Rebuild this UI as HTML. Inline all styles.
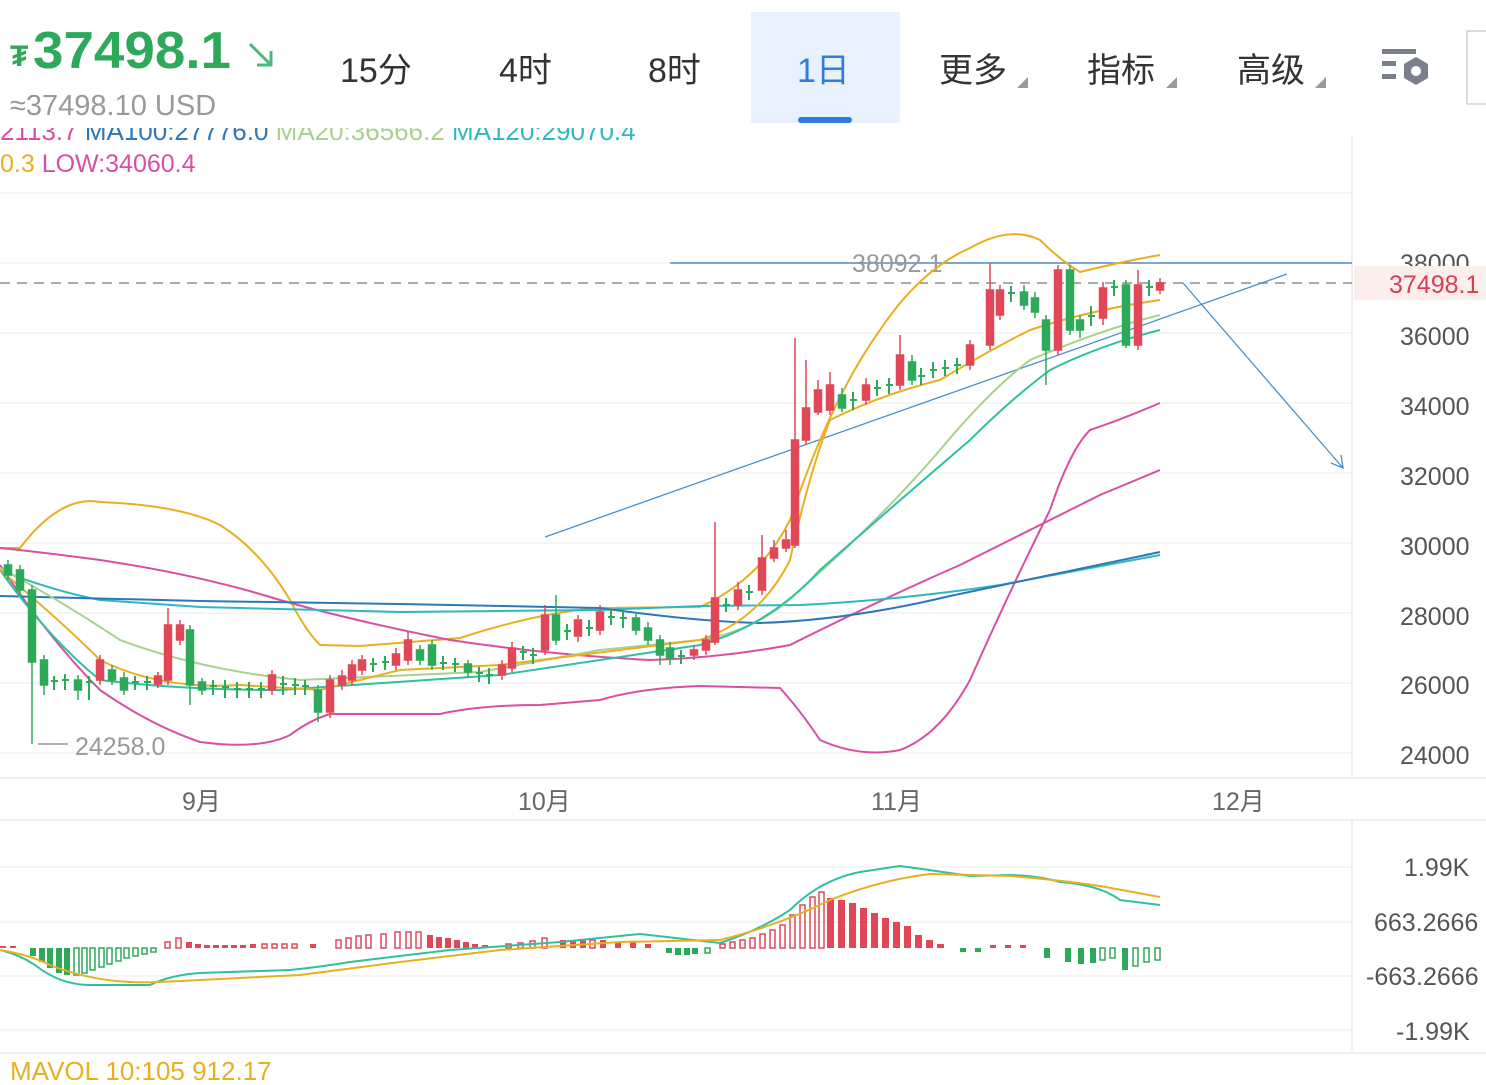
<!DOCTYPE html>
<html><head><meta charset="utf-8">
<style>
body{margin:0;width:1486px;height:1080px;overflow:hidden;background:#fff;font-family:"Liberation Sans","Noto Sans CJK SC",sans-serif;}
svg text{font-family:"Liberation Sans","Noto Sans CJK SC",sans-serif;}
</style></head><body>
<svg width="1486" height="1080" xmlns="http://www.w3.org/2000/svg">
<text x="0" y="140" font-size="26" fill="#d84fa3">2113.7 <tspan fill="#2c78b8">MA100:27776.0</tspan> <tspan fill="#a9d18e">MA20:36566.2</tspan> <tspan fill="#2fb8c0">MA120:29070.4</tspan></text>
<rect x="0" y="0" width="750" height="128" fill="#fff"/>
<rect x="751" y="12" width="149" height="111" fill="#e8f1fd"/>
<rect x="798" y="117" width="54" height="6" rx="3" fill="#2f7de1"/>
<text x="10" y="66" font-size="30" font-weight="bold" fill="#2ea95a">₮</text>
<text x="33" y="68" font-size="52" font-weight="bold" fill="#2ea95a" textLength="198" lengthAdjust="spacingAndGlyphs">37498.1</text>
<path d="M250 44 L271 65 M257 65 H271 V51" stroke="#4fb878" stroke-width="3" fill="none"/>
<text x="10" y="115" font-size="29" fill="#999">≈37498.10 USD</text>
<g font-size="34" fill="#333">
<text x="340" y="82">15分</text><text x="499" y="82">4时</text><text x="648" y="82">8时</text>
<text x="797" y="82" fill="#2f7de1">1日</text>
<text x="939" y="82">更多</text><text x="1087" y="82">指标</text><text x="1237" y="82">高级</text>
</g>
<g fill="#999"><path d="M1017 88 L1028 77 V88Z"/><path d="M1166 88 L1177 77 V88Z"/><path d="M1315 88 L1326 77 V88Z"/></g>
<g fill="#7a808a"><rect x="1382" y="49" width="34" height="5"/><rect x="1382" y="61" width="14" height="5"/><rect x="1382" y="74" width="14" height="5"/>
<path d="M1416 57 L1428 64 V78 L1416 85 L1404 78 V64Z"/></g><circle cx="1416" cy="71" r="5" fill="#fff"/>
<rect x="1467" y="31" width="30" height="73" fill="none" stroke="#bbb"/>
<text x="0" y="172" font-size="25" fill="#e8b020">0.3 <tspan fill="#d84fa3">LOW:34060.4</tspan></text>
<g stroke="#f2f2f2" stroke-width="1.5">
<line x1="0" y1="193" x2="1352" y2="193"/><line x1="0" y1="263" x2="1352" y2="263"/><line x1="0" y1="333" x2="1352" y2="333"/><line x1="0" y1="403" x2="1352" y2="403"/><line x1="0" y1="473" x2="1352" y2="473"/><line x1="0" y1="543" x2="1352" y2="543"/><line x1="0" y1="613" x2="1352" y2="613"/><line x1="0" y1="683" x2="1352" y2="683"/><line x1="0" y1="753" x2="1352" y2="753"/>
<line x1="0" y1="867" x2="1352" y2="867"/><line x1="0" y1="922" x2="1352" y2="922"/><line x1="0" y1="976" x2="1352" y2="976"/><line x1="0" y1="1030" x2="1352" y2="1030"/>
</g>
<line x1="1352" y1="135" x2="1352" y2="778" stroke="#eee" stroke-width="2"/>
<line x1="1352" y1="820" x2="1352" y2="1050" stroke="#eee" stroke-width="2"/>
<line x1="0" y1="778" x2="1486" y2="778" stroke="#eee" stroke-width="2"/>
<line x1="0" y1="820" x2="1486" y2="820" stroke="#eee" stroke-width="2"/>
<line x1="0" y1="1053" x2="1486" y2="1053" stroke="#eee" stroke-width="2"/>
<g font-size="25" fill="#555">
<text x="1400" y="272">38000</text><text x="1400" y="345">36000</text><text x="1400" y="415">34000</text><text x="1400" y="485">32000</text><text x="1400" y="555">30000</text><text x="1400" y="625">28000</text><text x="1400" y="694">26000</text><text x="1400" y="764">24000</text>
</g>
<g font-size="25" fill="#666"><text x="182" y="810">9月</text><text x="518" y="810">10月</text><text x="871" y="810">11月</text><text x="1212" y="810">12月</text></g>
<g font-size="25" fill="#555"><text x="1404" y="876">1.99K</text><text x="1374" y="931">663.2666</text><text x="1366" y="985">-663.2666</text><text x="1396" y="1040">-1.99K</text></g>
<rect x="1354" y="266" width="132" height="34" fill="#fdeeee"/>
<text x="1389" y="293" font-size="25" fill="#d84050">37498.1</text>
<line x1="0" y1="283" x2="1352" y2="283" stroke="#aaa" stroke-width="2" stroke-dasharray="10,7"/>
<line x1="670" y1="263" x2="1352" y2="263" stroke="#4a90c8" stroke-width="1.5"/>
<text x="852" y="272" font-size="25" fill="#999">38092.1</text>
<line x1="545" y1="537" x2="1287" y2="274" stroke="#4a90c8" stroke-width="1.3"/>
<path d="M1183 283 L1343 468 M1331 463 L1343 468 L1341 455" stroke="#4a90c8" stroke-width="1.3" fill="none"/>
<line x1="38" y1="744" x2="68" y2="744" stroke="#999" stroke-width="1.5"/>
<text x="75" y="755" font-size="25" fill="#999">24258.0</text>
<g fill="none" stroke-width="2">
<path stroke="#e8b020" d="M0 548 L20 548 Q60 495 100 502 Q180 505 220 525 Q260 550 290 600 Q305 630 320 645 L360 646 L460 638 Q540 612 600 608 L700 607 Q760 580 790 520 Q830 400 880 330 Q920 270 970 248 Q1010 225 1040 240 Q1060 260 1080 272 Q1120 262 1160 255"/>
<path stroke="#d84fa3" d="M0 548 Q40 552 100 560 Q200 575 280 600 Q350 620 450 640 Q550 655 650 660 Q720 658 790 645 Q880 600 960 565 Q1040 525 1100 495 L1160 470"/>
<path stroke="#d84fa3" d="M0 565 Q50 640 100 690 Q150 725 200 742 Q260 750 290 735 Q310 720 330 714 L440 714 Q480 705 540 705 L600 700 Q640 688 700 686 L780 688 Q800 710 820 740 Q860 758 900 750 Q940 735 970 680 Q1010 590 1050 510 Q1070 450 1090 430 Q1120 420 1160 403"/>
<path stroke="#2fb8c0" d="M0 570 Q50 590 100 600 L200 607 L400 612 L600 610 L700 606 L800 605 Q900 600 1000 585 L1160 555"/>
<path stroke="#2c78b8" d="M0 596 L200 601 L400 604 L600 608 Q700 622 760 623 Q850 620 950 596 Q1050 575 1160 552"/>
<path stroke="#a9d18e" d="M0 568 Q60 600 120 640 Q200 670 300 680 L480 672 L600 650 L700 640 Q760 630 800 590 Q880 520 940 450 Q990 390 1030 360 Q1100 330 1160 315"/>
<path stroke="#2fc0a0" d="M0 570 Q50 640 100 680 Q180 690 280 690 L500 675 L700 645 Q770 625 820 570 Q900 500 970 440 Q1010 400 1050 370 Q1100 345 1160 330"/>
<path stroke="#e8b020" d="M0 570 Q60 620 100 660 Q160 690 240 685 L320 690 L400 670 L500 665 L700 640 Q760 620 790 560 Q810 470 830 420 Q880 395 940 380 Q990 350 1030 330 Q1090 310 1160 300"/>
</g>
<!-- candles: green -->
<g fill="#2ea95a" stroke="#2ea95a" stroke-width="1.5">
<path fill="none" d="M8 560V580 M20 565V595 M32 585V744 M44 655V695 M78 675V700 M112 665V685 M124 672V695 M190 625V705 M202 678V695 M318 685V722 M420 645V665 M432 640V670 M468 660V678 M556 595V645 M636 612V635 M648 622V645 M660 635V665 M670 642V665 M842 388V412 M912 355V385 M1024 285V310 M1035 292V318 M1046 315V385 M1070 265V335 M1080 315V338 M1126 280V348"/>
<rect x="4.5" y="565" width="7" height="10"/><rect x="16.5" y="570" width="7" height="20"/><rect x="28.5" y="590" width="7" height="72"/><rect x="40.5" y="660" width="7" height="25"/><rect x="74.5" y="680" width="7" height="10"/><rect x="108.5" y="670" width="7" height="10"/><rect x="120.5" y="678" width="7" height="12"/><rect x="186.5" y="630" width="7" height="55"/><rect x="198.5" y="682" width="7" height="8"/><rect x="314.5" y="690" width="7" height="22"/><rect x="416.5" y="650" width="7" height="10"/><rect x="428.5" y="645" width="7" height="20"/><rect x="464.5" y="664" width="7" height="8"/><rect x="552.5" y="615" width="7" height="25"/><rect x="632.5" y="618" width="7" height="12"/><rect x="644.5" y="628" width="7" height="12"/><rect x="656.5" y="640" width="7" height="15"/><rect x="666.5" y="648" width="7" height="10"/><rect x="838.5" y="395" width="7" height="13"/><rect x="908.5" y="362" width="7" height="18"/><rect x="1020.5" y="292" width="7" height="13"/><rect x="1031.5" y="298" width="7" height="14"/><rect x="1042.5" y="320" width="7" height="30"/><rect x="1066.5" y="270" width="7" height="60"/><rect x="1076.5" y="320" width="7" height="10"/><rect x="1122.5" y="285" width="7" height="60"/>
</g>
<!-- candles: red -->
<g fill="#e04858" stroke="#e04858" stroke-width="1.5">
<path fill="none" d="M100 655V685 M158 672V688 M168 608V685 M180 620V645 M272 670V695 M330 675V718 M342 670V690 M352 660V685 M362 655V675 M396 648V670 M408 632V665 M502 660V680 M512 642V672 M545 605V655 M578 615V642 M600 605V635 M694 645V660 M706 635V655 M715 522V645 M738 582V610 M762 535V595 M774 540V562 M786 530V552 M795 338V548 M806 360V445 M818 380V415 M830 372V415 M866 378V405 M900 335V390 M970 340V370 M990 263V350 M1000 285V320 M1058 265V355 M1103 282V325 M1138 270V350 M1160 278V294"/>
<rect x="96.5" y="660" width="7" height="20"/><rect x="154.5" y="676" width="7" height="8"/><rect x="164.5" y="625" width="7" height="55"/><rect x="176.5" y="625" width="7" height="15"/><rect x="268.5" y="675" width="7" height="15"/><rect x="326.5" y="680" width="7" height="32"/><rect x="338.5" y="676" width="7" height="9"/><rect x="348.5" y="665" width="7" height="15"/><rect x="358.5" y="660" width="7" height="10"/><rect x="392.5" y="654" width="7" height="11"/><rect x="404.5" y="640" width="7" height="20"/><rect x="498.5" y="665" width="7" height="10"/><rect x="508.5" y="648" width="7" height="20"/><rect x="541.5" y="615" width="7" height="35"/><rect x="574.5" y="620" width="7" height="16"/><rect x="596.5" y="612" width="7" height="18"/><rect x="690.5" y="650" width="7" height="5"/><rect x="702.5" y="640" width="7" height="10"/><rect x="711.5" y="598" width="7" height="44"/><rect x="734.5" y="590" width="7" height="15"/><rect x="758.5" y="558" width="7" height="32"/><rect x="770.5" y="548" width="7" height="10"/><rect x="782.5" y="540" width="7" height="8"/><rect x="791.5" y="440" width="7" height="105"/><rect x="802.5" y="408" width="7" height="32"/><rect x="814.5" y="390" width="7" height="22"/><rect x="826.5" y="385" width="7" height="25"/><rect x="862.5" y="385" width="7" height="15"/><rect x="896.5" y="355" width="7" height="30"/><rect x="966.5" y="345" width="7" height="20"/><rect x="986.5" y="290" width="7" height="55"/><rect x="996.5" y="290" width="7" height="25"/><rect x="1054.5" y="270" width="7" height="80"/><rect x="1099.5" y="288" width="7" height="30"/><rect x="1134.5" y="285" width="7" height="60"/><rect x="1156.5" y="283" width="7" height="7"/>
</g>
<!-- small dojis -->
<g stroke="#2ea95a" stroke-width="2" fill="none">
<path d="M51 681h7 M62 680h7 M86 682h7 M132 682h7 M144 682h7 M210 686h7 M222 687h7 M234 689h7 M246 689h7 M258 689h7 M280 684h7 M292 685h7 M302 686h7 M370 664h7 M382 662h7 M440 663h7 M452 664h7 M476 673h7 M486 675h7 M520 652h7 M530 655h7 M564 631h7 M586 628h7 M608 617h7 M620 618h7 M678 656h7 M723 605h7 M746 592h7 M850 400h7 M874 388h7 M886 385h7 M918 376h7 M930 370h7 M942 368h7 M954 365h7 M1008 293h7 M1088 316h7 M1111 287h7 M1146 287h7"/>
<path d="M54 676V690 M65 674V690 M89 676V700 M135 676V690 M147 676V690 M213 680V695 M225 680V698 M237 682V698 M249 682V698 M261 682V698 M283 676V695 M295 678V695 M305 680V695 M373 658V672 M385 656V670 M443 656V670 M455 658V672 M479 667V682 M489 668V684 M523 646V660 M533 648V664 M567 624V640 M589 620V636 M611 610V625 M623 610V628 M681 650V664 M726 598V612 M749 585V600 M853 392V410 M877 380V396 M889 378V394 M921 368V385 M933 362V378 M945 360V376 M957 358V374 M1011 286V302 M1091 306V326 M1114 280V296 M1149 280V296"/>
</g>
<!-- MACD histogram -->
<g fill="#2ea95a">
<rect x="30" y="948" width="6" height="8"/><rect x="39" y="948" width="6" height="14"/><rect x="47" y="948" width="6" height="20"/><rect x="56" y="948" width="6" height="25"/><rect x="64" y="948" width="6" height="27"/><rect x="666" y="948" width="6" height="5"/><rect x="675" y="948" width="6" height="7"/><rect x="684" y="948" width="6" height="7"/><rect x="692" y="948" width="6" height="6"/><rect x="1044" y="948" width="6" height="10"/><rect x="1065" y="948" width="6" height="14"/><rect x="1078" y="948" width="6" height="16"/><rect x="1090" y="948" width="6" height="15"/><rect x="1122" y="948" width="6" height="22"/><rect x="960" y="948" width="6" height="4"/><rect x="975" y="948" width="6" height="4"/>
</g>
<g fill="none" stroke="#2ea95a" stroke-width="1.5">
<rect x="74" y="948" width="5" height="27"/><rect x="82" y="948" width="5" height="25"/><rect x="90" y="948" width="5" height="22"/><rect x="99" y="948" width="5" height="19"/><rect x="107" y="948" width="5" height="16"/><rect x="116" y="948" width="5" height="13"/><rect x="124" y="948" width="5" height="10"/><rect x="133" y="948" width="5" height="8"/><rect x="142" y="948" width="5" height="6"/><rect x="151" y="948" width="5" height="4"/><rect x="705" y="948" width="5" height="5"/><rect x="1100" y="948" width="5" height="12"/><rect x="1110" y="948" width="5" height="10"/><rect x="1133" y="948" width="5" height="18"/><rect x="1144" y="948" width="5" height="14"/><rect x="1155" y="948" width="5" height="12"/>
</g>
<g fill="#e04858">
<rect x="0" y="946" width="6" height="2"/><rect x="10" y="946" width="6" height="2"/><rect x="186" y="942" width="6" height="6"/><rect x="195" y="944" width="6" height="4"/><rect x="204" y="945" width="6" height="3"/><rect x="213" y="945" width="6" height="3"/><rect x="222" y="945" width="6" height="3"/><rect x="231" y="945" width="6" height="3"/><rect x="240" y="945" width="6" height="3"/><rect x="250" y="944" width="6" height="4"/><rect x="310" y="944" width="6" height="4"/><rect x="427" y="935" width="6" height="13"/><rect x="436" y="937" width="6" height="11"/><rect x="445" y="938" width="6" height="10"/><rect x="454" y="940" width="6" height="8"/><rect x="463" y="942" width="6" height="6"/><rect x="472" y="944" width="6" height="4"/><rect x="482" y="945" width="6" height="3"/><rect x="560" y="940" width="6" height="8"/><rect x="570" y="940" width="6" height="8"/><rect x="580" y="940" width="6" height="8"/><rect x="600" y="940" width="6" height="8"/><rect x="615" y="942" width="6" height="6"/><rect x="630" y="942" width="6" height="6"/><rect x="645" y="944" width="6" height="4"/><rect x="827" y="898" width="7" height="50"/><rect x="838" y="900" width="7" height="48"/><rect x="849" y="903" width="7" height="45"/><rect x="860" y="908" width="7" height="40"/><rect x="871" y="913" width="7" height="35"/><rect x="882" y="918" width="7" height="30"/><rect x="893" y="922" width="7" height="26"/><rect x="904" y="926" width="7" height="22"/><rect x="915" y="935" width="7" height="13"/><rect x="926" y="940" width="7" height="8"/><rect x="937" y="944" width="7" height="4"/><rect x="990" y="945" width="6" height="3"/><rect x="1005" y="945" width="6" height="3"/><rect x="1020" y="945" width="6" height="3"/>
</g>
<g fill="none" stroke="#e04858" stroke-width="1.5">
<rect x="165" y="942" width="5" height="6"/><rect x="176" y="938" width="5" height="10"/><rect x="262" y="944" width="5" height="4"/><rect x="272" y="944" width="5" height="4"/><rect x="282" y="944" width="5" height="4"/><rect x="292" y="944" width="5" height="4"/><rect x="336" y="940" width="5" height="8"/><rect x="346" y="938" width="5" height="10"/><rect x="356" y="936" width="5" height="12"/><rect x="366" y="935" width="5" height="13"/><rect x="381" y="934" width="5" height="14"/><rect x="395" y="932" width="5" height="16"/><rect x="406" y="932" width="5" height="16"/><rect x="416" y="932" width="5" height="16"/><rect x="506" y="944" width="5" height="4"/><rect x="518" y="943" width="5" height="5"/><rect x="530" y="941" width="5" height="7"/><rect x="542" y="938" width="5" height="10"/><rect x="590" y="940" width="5" height="8"/><rect x="720" y="944" width="5" height="4"/><rect x="730" y="942" width="5" height="6"/><rect x="740" y="940" width="5" height="8"/><rect x="750" y="938" width="5" height="10"/><rect x="760" y="934" width="5" height="14"/><rect x="770" y="930" width="5" height="18"/><rect x="780" y="925" width="5" height="23"/><rect x="790" y="915" width="5" height="33"/><rect x="800" y="905" width="5" height="43"/><rect x="810" y="897" width="5" height="51"/><rect x="819" y="892" width="5" height="56"/>
</g>
<g fill="none" stroke-width="2">
<path stroke="#2fc0a0" d="M0 950 Q20 955 35 965 Q60 985 90 985 L150 985 Q170 975 200 973 L290 970 Q320 967 350 962 L450 950 L560 942 L640 934 L720 943 Q760 930 790 910 Q820 880 860 872 L900 866 Q930 870 970 876 L1010 875 Q1040 876 1060 882 Q1100 885 1120 900 L1160 905"/>
<path stroke="#e8b020" d="M0 950 Q30 955 50 965 Q100 985 160 982 L300 975 L400 962 L500 950 L620 942 L720 940 Q780 925 830 900 Q880 880 930 874 L1010 876 Q1060 880 1100 886 L1160 897"/>
</g>
<text x="10" y="1080" font-size="26" fill="#e8b020">MAVOL 10:105 912.17</text>
</svg>
</body></html>
